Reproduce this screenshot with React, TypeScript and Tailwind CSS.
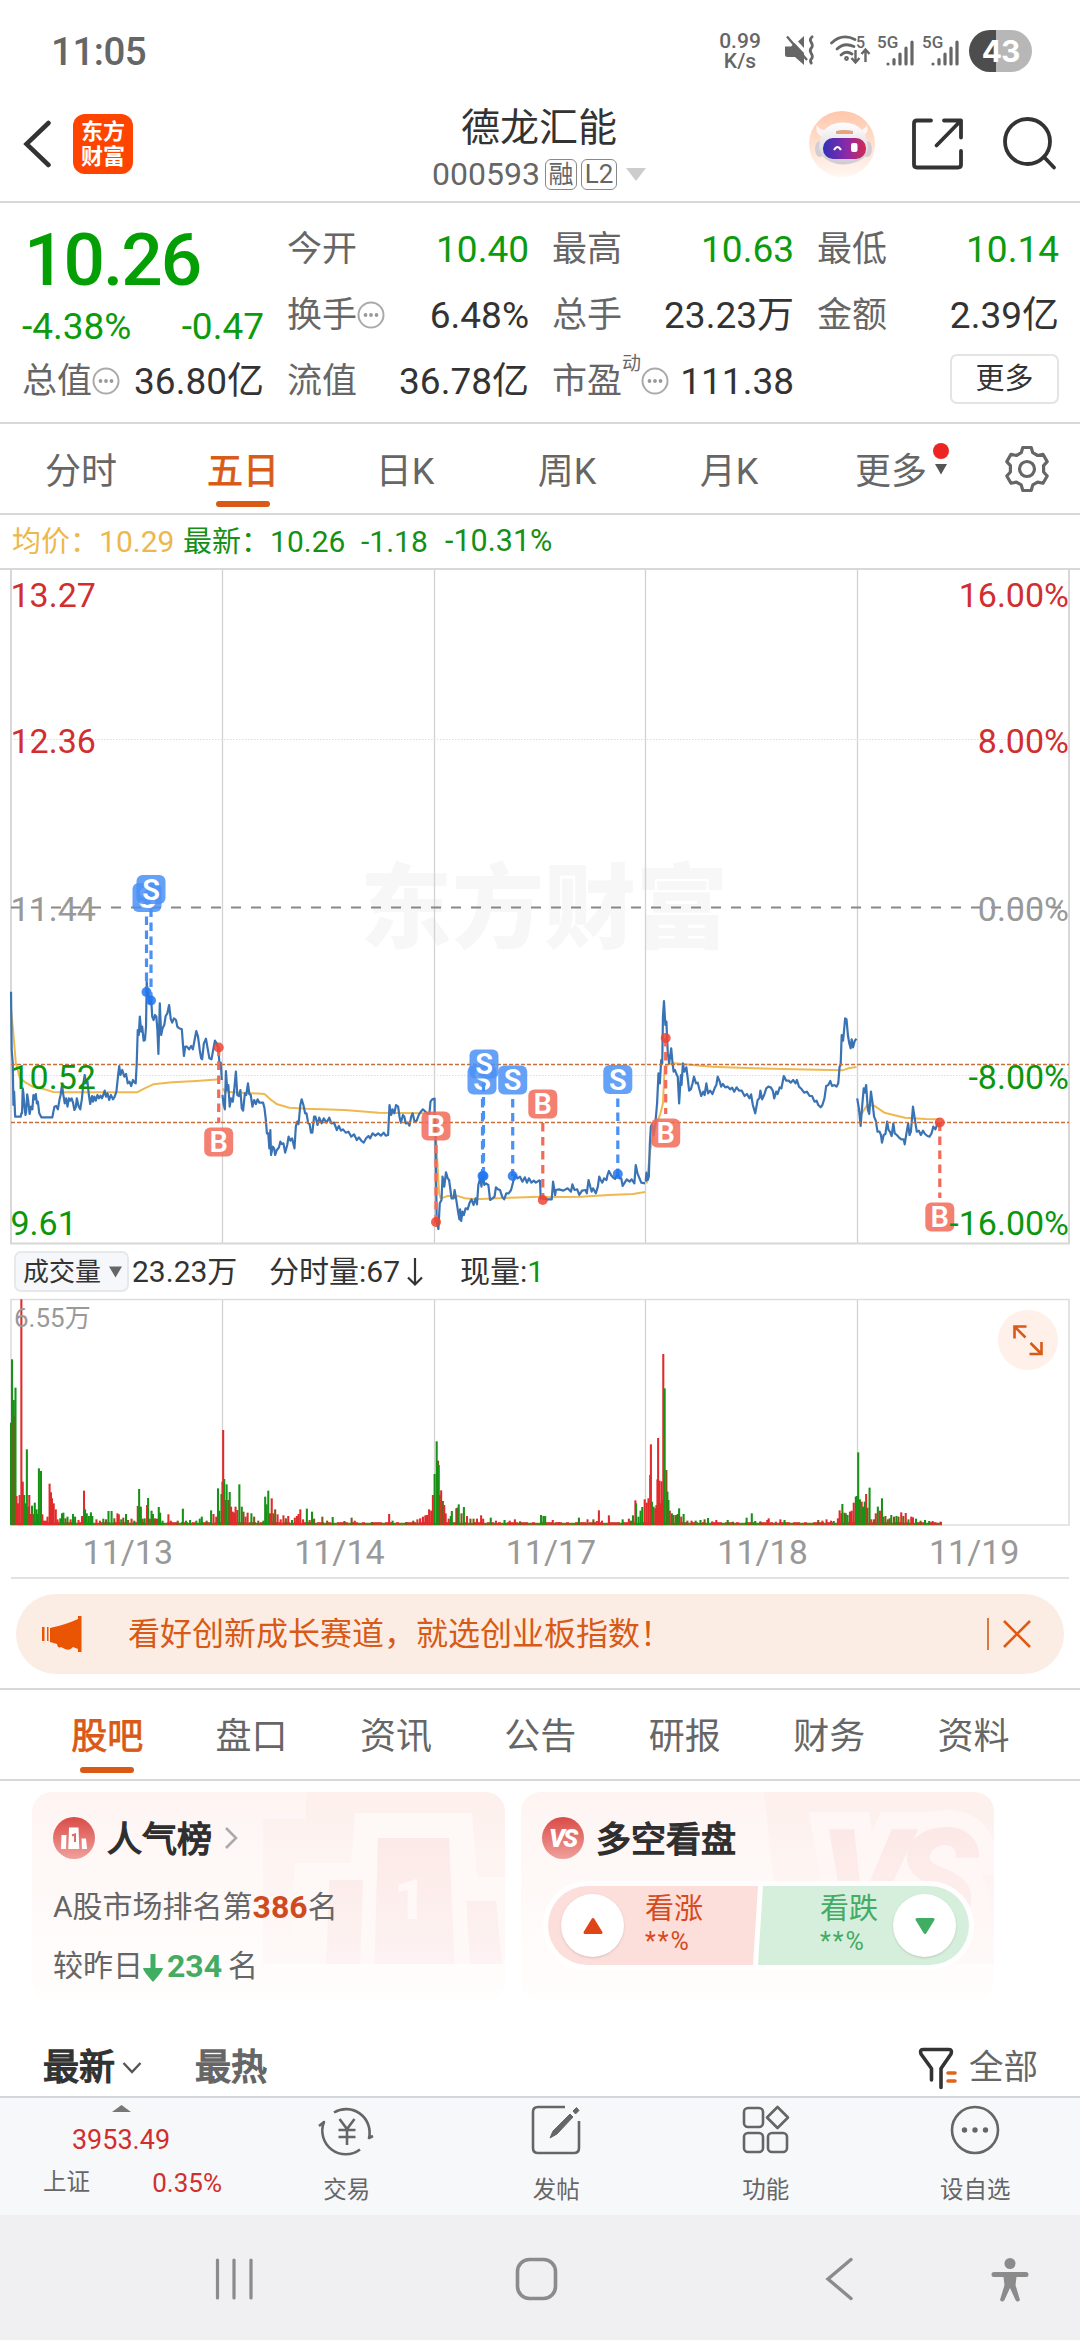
import type { ReactNode } from "react";
import clsx from "clsx";

const UP = "#d12f2f";
const DOWN = "#0c960c";
const BRAND = "#d85a16";

// Price and average series, one polyline per session. The chart is plotted in
// two halves, each half in its own 1568 x 1200 plotting space.
const PRICE_LEFT = [
  "32,425 34,600 37,640 39,765 41,725 44,800 60,800 62,790 64,790 66,715 68,730 71,770 74,795 76,785 79,733 82,752 86,792 90,770 94,778 97,735 100,748 104,732 107,760 110,755 114,790 120,802 152,802 158,770 163,768 168,778 173,748 176,735 180,705 184,735 188,760 192,745 196,770 200,745 204,752 208,745 212,758 216,780 220,772 223,745 228,768 233,778 238,745 242,700 246,675 250,700 254,695 258,735 262,762 267,738 270,755 274,740 278,752 283,735 287,745 292,737 296,745 300,735 304,722 308,740 312,730 317,750 322,735 328,748 333,740 338,725 342,685 346,648 350,675 355,660 361,680 366,672 371,700 376,695 381,708 386,690 391,698 394,700 397,640 400,540 403,555 406,500 410,545 413,530 417,572 421,570 424,530 426,395 428,420 430,420 434,460 438,430 442,500 446,510 450,495 454,500 457,540 460,612 464,460 468,555 472,535 477,525 481,498 486,490 491,465 496,508 500,518 505,505 511,510 515,530 520,535 528,538 531,580 534,618 538,590 543,590 549,598 555,588 560,598 565,570 570,543 575,560 580,600 584,625 587,628 592,580 598,566 602,590 608,625 614,628 619,600 624,572 629,580 634,595 637,640 641,638 644,690",
  "646,735 649,762 653,778 656,663 660,720 663,705 667,770 671,745 676,755 680,720 685,665 689,735 694,738 698,720 702,775 706,782 711,730 715,735 720,700 724,732 728,735 733,770 738,750 743,762 748,748 753,758 758,758 764,758 768,775 772,810 775,850 779,850 782,895 785,840 787,915 792,890 796,895 799,915 804,900 810,892 814,875 818,882 823,880 828,908 834,885 838,860 843,872 848,865 855,895 859,830 863,815 867,822 872,765 876,748 881,765 886,790 890,790 895,820 899,822 903,848 907,848 912,800 916,800 922,825 927,803 934,820 940,805 948,818 956,803 962,820 970,818 978,840 984,828 990,842 996,838 1004,848 1012,845 1020,860 1028,853 1036,870 1042,862 1050,873 1056,878 1063,865 1070,858 1075,865 1082,850 1090,857 1098,850 1106,857 1114,848 1120,857 1127,855 1131,765 1136,795 1140,778 1145,790 1150,765 1156,770 1160,800 1164,818 1170,795 1174,800 1178,820 1184,818 1189,827 1194,800 1198,790 1204,815 1210,812 1216,795 1222,785 1228,778 1240,790 1247,790 1250,755 1255,748 1262,746 1262,790",
  "1263,790 1265,900 1268,1115 1273,1137 1277,1060 1282,1050 1285,980 1290,1010 1295,967 1300,985 1304,990 1308,1020 1311,1045 1317,1045 1320,1020 1325,1050 1330,1085 1334,1108 1336,1078 1339,1113 1343,1085 1347,1095 1352,1075 1358,1078 1363,1060 1369,1048 1375,1065 1381,1045 1385,1063 1389,1005 1394,985 1398,1010 1402,965 1406,1005 1411,1000 1418,1005 1423,1050 1430,1045 1436,1040 1440,1012 1446,1018 1452,1020 1458,1040 1464,1048 1470,1030 1477,1030 1484,1020 1489,1000 1495,975 1503,985 1510,980 1517,995 1524,982 1530,998 1536,985 1543,998 1550,992 1556,998 1568,990",
];
const PRICE_RIGHT = [
  "0,990 2,1045 10,1045 20,1048 34,1048 38,995 44,1035 46,1020 55,1018 68,1022 80,1015 90,1025 94,1003 100,1020 108,1018 114,1035 122,1022 132,1020 136,1030 141,990 146,1010 150,1025 154,1015 162,1030 168,1010 172,980 176,990 181,998 186,985 193,990 196,975 200,963 206,975 213,983 218,987 226,972 231,985 236,985 240,1008 246,998 252,988 260,995 266,988 274,1000 278,945 283,970 289,985 294,998 305,1000",
  "307,995 309,968 313,990 316,980 319,880 322,830 326,820 330,855 335,820 340,760 344,670 348,700 352,630 355,640 357,500 360,453 364,525 367,515 371,610 375,640 381,595 385,640 388,665 392,660 396,672 400,680 404,760 409,675 411,705 415,640 419,665 425,652 429,685 433,722 438,718 443,700 447,680 453,700 458,698 462,715 468,738 474,725 478,735 483,700 488,730 494,722 501,732 508,712 512,705 516,680 522,695 526,710 531,702 538,712 545,710 552,718 558,713 564,725 571,712 578,722 586,722 594,738 601,732 608,745 613,733 618,765 625,790 632,750 637,745 640,722 645,748 651,735 657,715 663,710 670,712 676,722 680,745 686,725 690,732 696,712 701,715 708,678 715,692 722,692 728,698 735,690 742,700 746,690 752,710 760,718 767,728 775,725 783,738 790,738 797,755 803,752 808,765 815,772 820,765 826,745 831,708 837,705 843,693 848,708 855,705 861,710 866,700 870,650 873,645 876,555 880,572 883,540 886,505 890,508 894,555 898,580 902,595 905,568 909,592 914,572 919,566",
  "921,745 926,775 931,828 936,762 940,715 943,728 947,705 952,780 956,792 961,725 966,762 970,800 975,812 980,845 986,845 990,855 993,878 998,855 1003,852 1008,815 1012,840 1016,845 1021,858 1026,820 1030,850 1036,855 1042,862 1049,868 1056,868 1059,883 1064,850 1069,820 1073,855 1077,845 1083,770 1088,805 1094,845 1100,842 1106,855 1112,842 1118,852 1125,858 1131,860 1137,850 1142,830 1148,838 1154,822 1160,818",
];
const AVG_LEFT = [
  "32,480 38,540 46,640 58,685 75,698 95,710 130,718 155,726 200,727 300,727 398,727 420,715 445,703 500,697 570,693 640,688",
  "646,715 653,725 705,728 768,732 785,748 805,763 840,773 890,776 1000,780 1100,788 1230,790 1262,790",
  "1263,790 1268,900 1275,1030 1280,1045 1300,1038 1325,1037 1350,1045 1380,1048 1480,1043 1568,1040",
];
const AVG_RIGHT = [
  "0,1042 120,1040 200,1035 270,1032 305,1026",
  "310,1000 320,900 335,830 350,790 357,760 362,650 372,643 390,640 420,643 500,650 620,655 740,658 878,661 895,655 919,651",
  "921,780 935,790 950,765 970,767 1000,788 1060,803 1120,807 1160,808",
];

// Volume bars as "x top colour" (g = down, r = up, m = both overlapping).
const VOL_LEFT =
  "32 548 g,35 358 g,38 548 m,40 480 g,42 527 m,45 443 g,48 768 r,52 790 r,57 765 r,62 178 r,66 725 r,70 765 g,74 790 g,78 628 g,82 800 g,85 765 r,88 822 r,93 797 g,97 822 r,101 788 g,106 808 g,110 822 g,113 685 g,119 693 g,123 823 r,128 842 r,133 842 r,138 830 r,144 731 r,148 757 r,151 775 r,156 790 r,162 808 r,167 838 r,175 835 g,180 820 g,184 818 g,190 835 m,196 830 g,205 838 r,212 822 g,218 830 g,228 840 r,238 828 r,244 752 r,247 808 g,252 820 g,258 828 g,264 817 g,268 828 g,280 838 r,290 842 r,300 836 g,308 838 m,315 813 g,324 813 g,332 835 m,341 820 r,345 823 r,352 838 g,358 833 m,366 822 g,372 840 m,382 836 r,390 842 g,400 798 r,404 747 g,409 800 g,414 836 m,420 835 g,427 795 r,430 774 g,435 836 r,440 812 g,444 822 g,450 835 m,456 836 r,461 801 g,465 818 g,472 842 g,489 823 r,496 842 r,516 842 m,531 806 g,540 842 g,552 840 g,570 842 g,580 836 g,586 830 g,600 842 m,613 811 g,620 822 r,628 830 r,633 745 g,637 812 g,643 762 g,646 725 m,648 570 r,651 717 g,655 780 r,658 733 g,663 780 m,667 756 g,671 800 r,676 815 r,680 818 r,684 800 r,689 810 r,695 733 g,702 800 g,707 815 m,713 830 r,719 818 r,730 820 g,738 830 m,750 842 m,765 842 g,770 770 g,774 793 g,779 752 g,784 820 r,789 775 r,794 820 m,799 808 m,806 823 r,815 838 r,823 826 r,830 835 m,837 828 r,848 840 g,856 833 r,862 828 r,867 822 r,872 808 r,880 838 r,891 806 g,899 840 m,906 815 g,912 836 m,936 830 m,950 842 m,966 831 g,1000 843 m,1021 833 m,1030 842 r,1080 846 m,1130 822 r,1140 842 g,1180 846 m,1200 842 m,1212 838 r,1220 835 r,1228 830 r,1235 826 r,1240 825 r,1246 808 r,1252 812 r,1257 765 r,1262 702 g,1268 604 g,1272 662 m,1274 675 g,1277 765 m,1281 751 r,1286 783 m,1290 795 r,1294 820 r,1303 836 r,1309 828 g,1312 813 g,1325 805 r,1328 803 m,1332 793 g,1340 820 m,1347 801 g,1356 828 r,1366 836 m,1375 836 m,1385 836 r,1397 826 r,1403 836 r,1425 833 g,1440 842 r,1465 840 g,1480 842 r,1495 838 r,1510 844 m";
const VOL_RIGHT =
  "3 825 g,10 828 g,15 828 g,37 840 r,55 846 r,113 833 g,138 838 r,155 838 m,165 843 r,171 811 r,180 842 r,200 826 r,240 838 g,258 836 r,264 842 m,270 826 g,277 781 r,279 790 g,286 830 g,292 812 g,297 801 g,304 778 r,310 788 r,315 775 r,320 705 r,322 613 r,325 785 g,330 800 g,335 805 r,338 795 r,341 718 r,343 594 r,347 722 r,350 790 r,353 724 r,356 780 r,358 342 r,362 445 g,367 690 m,370 755 g,373 780 g,377 812 r,383 820 g,388 825 m,395 825 g,400 822 m,404 805 g,410 830 r,417 822 g,428 842 m,440 842 r,452 842 g,466 840 g,478 838 m,488 834 g,500 844 r,512 840 r,545 840 g,560 845 m,600 833 g,615 820 g,625 843 g,640 844 m,660 840 r,664 835 r,685 845 r,698 838 r,710 840 g,808 840 m,820 842 r,832 838 r,845 842 r,853 843 g,865 835 r,870 811 r,875 820 r,878 792 g,884 818 m,888 820 g,893 825 g,900 815 r,905 812 r,911 788 r,917 770 m,920 768 g,924 637 g,929 778 g,934 785 r,938 800 g,943 785 g,947 762 r,951 803 m,957 743 g,962 838 r,970 838 m,975 820 r,981 800 g,987 812 r,993 775 g,997 830 g,1003 828 m,1010 838 g,1015 835 r,1020 825 g,1028 830 m,1035 828 g,1041 830 m,1049 817 r,1055 828 m,1062 819 r,1070 838 g,1078 830 r,1083 832 r,1092 836 g,1105 842 m,1118 840 g,1130 843 g,1140 843 r,1150 848 r,1163 845 r";

const VOL_COLORS: Record<string, string> = { g: "#179217", r: "#df2b2b", m: "#7a5a18" };

type Marker = { side: "B" | "S"; x: number; y: number; dotX: number; dotY: number };

const MARKERS: Marker[] = [
  { side: "S", x: 147, y: 897.5, dotX: 146.5, dotY: 992 },
  { side: "S", x: 151, y: 889.5, dotX: 151, dotY: 1000.5 },
  { side: "B", x: 218.7, y: 1142, dotX: 218.7, dotY: 1047.5 },
  { side: "B", x: 436, y: 1126, dotX: 436, dotY: 1222 },
  { side: "S", x: 482, y: 1080, dotX: 482.5, dotY: 1176 },
  { side: "S", x: 484, y: 1064, dotX: 483.5, dotY: 1176 },
  { side: "S", x: 512.7, y: 1080, dotX: 512.7, dotY: 1176 },
  { side: "B", x: 542.8, y: 1104, dotX: 542.8, dotY: 1200 },
  { side: "S", x: 617.8, y: 1079.5, dotX: 617.8, dotY: 1174 },
  { side: "B", x: 665.7, y: 1133, dotX: 665.7, dotY: 1038 },
  { side: "B", x: 939.8, y: 1217, dotX: 939.8, dotY: 1122.5 },
];

const DAY_LINES = [222.5, 434.5, 645.5, 857.5];

function StatusBar() {
  return (
    <div className="flex h-[88px] items-start pl-[51px] pt-[30px] text-[#666]">
      <span className="mt-[2px] w-[666px] text-[38.500px] font-medium leading-[39px] tracking-[-0.500px]">11:05</span>
      <div className="mt-[1px] w-[46px] text-center text-[21px] font-medium leading-[20px]">
        <div>0.99</div>
        <div>K/s</div>
      </div>
      <svg className="ml-[21px] mt-[4px] h-[32px] w-[32px]" viewBox="0 0 32 32" fill="none">
        <path d="M1 12.500h6l3.500-3.500L20 19v12l-9-8H3.500Q1 23 1 20.500Z" fill="#666" />
        <path d="M20 2v12l-6-6.500Z" fill="#666" />
        <path d="M3 2.500 23 26" stroke="#666" strokeWidth="2.400" />
        <path d="M29 2q-4 3-2 6t1 5q-3 3-1 6t1 5q-3 3 0 6" stroke="#666" strokeWidth="2.800" />
      </svg>
      <svg className="ml-[14px] mt-[4px] h-[32px] w-[42px] overflow-visible" viewBox="0 0 42 32" fill="none" stroke="#666" strokeWidth="2.800">
        <path d="M1.500 9Q12 -1 25 5.500M7 15q7-7 17-2.500M11 21q5-5 11-1" strokeLinecap="round" />
        <circle cx="16.500" cy="24.500" r="1" />
        <path d="M25.500 16v12m-4-4 4 4.500 4-4.500M35.500 28V16m-4 4 4-4.500 4 4.500" strokeWidth="2.400" />
        <text x="26" y="13.500" fontSize="16" fontWeight="500" fill="#666" stroke="none">5</text>
      </svg>
      <SignalIcon className="ml-[5px]" />
      <SignalIcon className="ml-[5px]" />
      <div className="ml-[7px] flex h-[42px] w-[63px] items-center justify-center rounded-full bg-linear-to-r from-[#4d4d4d] from-43% to-[#b7b7b7] to-43% font-[Inter] text-[30px] font-bold leading-none tracking-[-1px] text-white">
        43
      </div>
    </div>
  );
}

function SignalIcon({ className }: { className?: string }) {
  return (
    <svg className={clsx("mt-[4px] h-[32px] w-[40px] shrink-0 overflow-visible", className)} viewBox="0 0 40 32">
      <text x="0" y="13.500" fontSize="17" fontWeight="500" fill="#666">5G</text>
      <g stroke="#666" strokeWidth="3.200" strokeLinecap="round">
        <path d="M11 30v0M17 30v-4.500M23 30V20M29 30V14M35 30V8" />
      </g>
    </svg>
  );
}

function Header() {
  return (
    <header className="flex h-[115px] items-start border-b-2 border-[#d8d8d8] pl-[22px]">
      <svg className="mt-[32px] h-[48px] w-[30px]" viewBox="0 0 30 48" fill="none">
        <path d="M26.500 3 4.500 24l22 21" stroke="#333" strokeWidth="4.500" strokeLinecap="round" />
      </svg>
      <div className="ml-[21px] mt-[26px] flex h-[60px] w-[60px] flex-col items-center justify-center rounded-[12px] bg-[#ff4400] text-[22px] font-bold leading-[25px] text-white">
        <span>东方</span>
        <span>财富</span>
      </div>
      <div className="ml-[293px] flex w-[226px] flex-col items-center">
        <h1 className="mt-[21px] text-[39px] leading-[39px] text-[#333]">德龙汇能</h1>
        <div className="mt-[8px] flex h-[36px] items-center text-[32px] leading-none text-[#666]">
          <span>000593</span>
          <span className="ml-[5px] flex h-[31px] w-[32px] items-center justify-center rounded-[6px] border-[1.500px] border-[#888] text-[25px]">
            融
          </span>
          <span className="ml-[4px] flex h-[31px] w-[36px] items-center justify-center rounded-[6px] border-[1.500px] border-[#888] text-[26px]">
            L2
          </span>
          <svg className="ml-[9px] h-[14px] w-[20px]" viewBox="0 0 20 14">
            <path d="M0 1h20L10 14Z" fill="#ccc" />
          </svg>
        </div>
      </div>
      <Robot />
      <svg className="ml-[35px] mt-[28px] h-[56px] w-[56px]" viewBox="0 0 56 56" fill="none" stroke="#333" strokeWidth="3.800" strokeLinecap="round" strokeLinejoin="round">
        <path d="M21 4.500H7Q4 4.500 4 7.500v41q0 3 3 3h41q3 0 3-3V35M34 4.500h17v17M50 5.500 26.500 29.500" />
      </svg>
      <svg className="ml-[34px] mt-[26px] h-[60px] w-[60px]" viewBox="0 0 60 60" fill="none" stroke="#333" strokeWidth="3.800" strokeLinecap="round">
        <circle cx="27.500" cy="27.500" r="22.500" />
        <path d="m44 43 10 10.500" />
      </svg>
    </header>
  );
}

function Robot() {
  return (
    <svg className="ml-[157px] mt-[23px] h-[66px] w-[66px]" viewBox="0 0 66 66">
      <defs>
        <linearGradient id="halo" x1="0" y1="0" x2="0" y2="1">
          <stop offset="0" stopColor="#ffc7ab" />
          <stop offset="1" stopColor="#fff8f3" />
        </linearGradient>
        <linearGradient id="visor" x1="0" y1="0" x2="1" y2="0">
          <stop offset="0" stopColor="#3430b8" />
          <stop offset="0.550" stopColor="#8a2aa8" />
          <stop offset="1" stopColor="#d52a50" />
        </linearGradient>
        <linearGradient id="shell" x1="0" y1="0" x2="0" y2="1">
          <stop offset="0" stopColor="#ffffff" />
          <stop offset="1" stopColor="#cfc9d4" />
        </linearGradient>
      </defs>
      <circle cx="33" cy="33" r="33" fill="url(#halo)" />
      <path d="M13 26Q5 21 8 14q3 6 9 5ZM52 26q9-4 6-12-3 6-9 5Z" fill="#fbf5f3" />
      <ellipse cx="11" cy="38" rx="5" ry="8" fill="#d3ced6" />
      <ellipse cx="58" cy="38" rx="5" ry="8" fill="#d3ced6" />
      <path d="M10 36Q11 12 34 11.500 57 12 59 36 59 52 34 53.500 12 52 10 36Z" fill="url(#shell)" />
      <path d="M27 20q8-2 17 0v3H27Z" fill="#e3a57e" />
      <rect x="14" y="27" width="43" height="21" rx="10" fill="url(#visor)" />
      <path d="M25 39q3.500-6 7 0" fill="none" stroke="#fff" strokeWidth="2" />
      <rect x="42" y="32" width="6.500" height="9" rx="2" fill="#fff" />
    </svg>
  );
}

function InfoDot() {
  return (
    <svg className="h-[28px] w-[28px] shrink-0" viewBox="0 0 28 28">
      <circle cx="14" cy="14" r="12.500" fill="none" stroke="#aaa" strokeWidth="2" />
      <g fill="#999">
        <circle cx="8.500" cy="14" r="1.900" />
        <circle cx="14" cy="14" r="1.900" />
        <circle cx="19.500" cy="14" r="1.900" />
      </g>
    </svg>
  );
}

function Cell({ label, value, info, sup, down }: { label: string; value: string; info?: boolean; sup?: string; down?: boolean }) {
  return (
    <div className="flex h-[66px] items-center justify-between whitespace-nowrap leading-none">
      <div className="flex items-center text-[35px] text-[#666]">
        {label}
        {sup && <span className="-mt-[36px] text-[19px]">{sup}</span>}
        {info && <InfoDot />}
      </div>
      <span className={clsx("text-[37px]", down ? "text-[#0c9b0c]" : "text-[#333]")}>{value}</span>
    </div>
  );
}

function Quote() {
  return (
    <section className="flex h-[221px] gap-[23px] border-b-2 border-[#d8d8d8] pl-[22px] pt-[13px]">
      <div className="w-[242px]">
        <div className="flex h-[88px] items-center pl-[2px] text-[73px] font-medium leading-none tracking-[-2px] text-[#049f04]">10.26</div>
        <div className="flex h-[44px] items-center justify-between text-[37px] leading-none text-[#0c9b0c]">
          <span>-4.38%</span>
          <span>-0.47</span>
        </div>
        <Cell label="总值" value="36.80亿" info />
      </div>
      <div className="w-[242px]">
        <Cell label="今开" value="10.40" down />
        <Cell label="换手" value="6.48%" info />
        <Cell label="流值" value="36.78亿" />
      </div>
      <div className="w-[242px]">
        <Cell label="最高" value="10.63" down />
        <Cell label="总手" value="23.23万" />
        <Cell label="市盈" value="111.38" sup="动" info />
      </div>
      <div className="w-[242px]">
        <Cell label="最低" value="10.14" down />
        <Cell label="金额" value="2.39亿" />
        <div className="flex h-[62px] items-center justify-end">
          <button className="h-[50px] w-[109px] rounded-[7px] border-2 border-[#e4e4e4] text-[29px] leading-none text-[#333]">
            更多
          </button>
        </div>
      </div>
    </section>
  );
}

function PeriodTabs() {
  const tabs = ["分时", "五日", "日K", "周K", "月K"];
  return (
    <nav className="flex h-[91px] border-b-2 border-[#d8d8d8] text-[36px] leading-none text-[#666]">
      {tabs.map((tab) => (
        <div
          key={tab}
          className={clsx("flex w-[162px] flex-col items-center pt-[30px]", tab === "五日" && "text-[#d85a16] [-webkit-text-stroke:0.8px]")}
        >
          {tab}
          {tab === "五日" && <span className="mt-[11px] h-[6px] w-[54px] rounded-full bg-[#d85a16]" />}
        </div>
      ))}
      <div className="flex pl-[45px] pt-[30px]">
        更多
        <svg className="-mt-[12px] ml-[5px] h-[44px] w-[18px]" viewBox="0 0 18 44">
          <circle cx="9" cy="9" r="8" fill="#ee2424" />
          <path d="M3 22h12L9 32.500Z" fill="#555" />
        </svg>
      </div>
      <svg className="ml-[52px] mt-[20px] h-[50px] w-[50px]" viewBox="0 0 50 50" fill="none" stroke="#666" strokeWidth="3.200" strokeLinejoin="round">
        <path d="M20.800 3.500h8.400l1.600 5.200 4.800 2.800 5.400-1.200 4.200 7.300-3.600 4v6.400l3.600 4-4.200 7.300-5.400-1.200-4.800 2.800-1.600 5.600h-8.400l-1.600-5.600-4.800-2.800L9 39.300 4.800 32l3.600-4v-6.400l-3.600-4L9 10.300l5.400 1.200 4.800-2.800Z" />
        <circle cx="25" cy="25" r="7.500" />
      </svg>
    </nav>
  );
}

function AverageLine() {
  return (
    <div className="flex h-[55px] items-center whitespace-pre border-b-2 border-[#d8d8d8] pl-[12px] text-[30px] leading-none text-[#168f16]">
      <span className="w-[171px] text-[#ecb84d]">
        <span className="text-[29px]">均价：</span>10.29
      </span>
      <span className="w-[178px]">
        <span className="text-[29px]">最新：</span>10.26
      </span>
      <span className="w-[84px]">-1.18</span>
      <span className="text-[30.500px]">-10.31%</span>
    </div>
  );
}

function SeriesHalf({ x, price, avg }: { x: number; price: string[]; avg: string[] }) {
  return (
    <g transform={`translate(${x} 850) scale(0.34439 0.33333)`} fill="none" strokeLinejoin="round">
      {avg.map((points) => (
        <polyline key={points} points={points} stroke="#f0b850" strokeWidth="2" vectorEffect="non-scaling-stroke" />
      ))}
      {price.map((points) => (
        <polyline key={points} points={points} stroke="#3a73b4" strokeWidth="2.200" vectorEffect="non-scaling-stroke" />
      ))}
    </g>
  );
}

function TradeMarker({ side, x, y, dotX, dotY }: Marker) {
  const color = side === "B" ? "#f26a58" : "#4a90f5";
  const edge = dotY > y ? y + 19 : y - 19;
  return (
    <g>
      <path d={dotY > y ? `M${dotX} ${edge}V${dotY}` : `M${dotX} ${dotY}V${edge}`} stroke={color} strokeWidth="3.200" strokeDasharray="8.500 5.500" />
      <circle cx={dotX} cy={dotY} r="5" fill={side === "B" ? "#ee4433" : "#2176f0"} opacity="0.85" />
      <rect x={x - 14.5} y={y - 14.5} width="29" height="29" rx="6" fill={color} opacity="0.85" />
      <text x={x} y={y + 10.2} textAnchor="middle" fontSize="29" fontWeight="600" fill="#fff">
        {side}
      </text>
    </g>
  );
}

function PriceChart() {
  const left: [string, number, string][] = [
    ["13.27", 607, UP],
    ["12.36", 752.5, UP],
    ["11.44", 921, "#999"],
    ["10.52", 1088.5, DOWN],
    ["9.61", 1235, DOWN],
  ];
  const right = ["16.00%", "8.00%", "0.00%", "-8.00%", "-16.00%"];
  return (
    <svg className="block h-[675px] w-[1080px]" viewBox="0 570 1080 675">
      <text x="544" y="941" textAnchor="middle" fontSize="92" fontWeight="900" fill="#f7f7f7">
        东方财富
      </text>
      <path d={DAY_LINES.map((x) => `M${x} 570V1243`).join("")} stroke="#d2d2d2" strokeWidth="1.300" />
      <path d="M11 570V1243.500H1069V570" fill="none" stroke="#d8d8d8" strokeWidth="2" />
      <path d="M11 739.500H1069M11 1075.500H1069" stroke="#ddd" strokeWidth="1.200" strokeDasharray="1.500 1.500" />
      <SeriesHalf x={0} price={PRICE_LEFT} avg={AVG_LEFT} />
      <SeriesHalf x={540} price={PRICE_RIGHT} avg={AVG_RIGHT} />
      <path d="M11 1064.500H1069M11 1122.500H1069" stroke="#c8703c" strokeWidth="1.500" strokeDasharray="4 2" />
      <path d="M11 907.500H1069" stroke="#888" strokeWidth="2" strokeDasharray="10 10" />
      {MARKERS.map((m) => (
        <TradeMarker key={`${m.x}-${m.y}`} {...m} />
      ))}
      <g fontSize="34">
        {left.map(([label, y, fill], i) => (
          <g key={label} fill={fill}>
            <text x="10.500" y={y}>{label}</text>
            <text x="1069" y={y} textAnchor="end">{right[i]}</text>
          </g>
        ))}
      </g>
    </svg>
  );
}

function VolumeHalf({ x, bars }: { x: number; bars: string }) {
  return (
    <g transform={`translate(${x} 1240) scale(0.34439 0.33333)`}>
      {bars.split(",").map((bar) => {
        const [bx, top, tone] = bar.split(" ");
        return <rect key={bar} x={Number(bx) - 3} y={top} width="6" height={855 - Number(top)} fill={VOL_COLORS[tone]} />;
      })}
    </g>
  );
}

function VolumeChart() {
  return (
    <svg className="block h-[230px] w-[1080px]" viewBox="0 1298 1080 230">
      <path d="M11 1525V1299.500H1069V1525Z" fill="none" stroke="#dedede" strokeWidth="1.600" />
      <path d={DAY_LINES.map((x) => `M${x} 1300V1525`).join("")} stroke="#d2d2d2" strokeWidth="1.300" />
      <path d="M11 1524H942" stroke="#5f7a16" strokeWidth="2.500" />
      <path d="M11 1523.500H942" stroke="#df2b2b" strokeWidth="2.500" strokeDasharray="7 4 3 6 11 3" />
      <VolumeHalf x={0} bars={VOL_LEFT} />
      <VolumeHalf x={540} bars={VOL_RIGHT} />
      <text x="14" y="1327" fontSize="26" fill="#999">6.55万</text>
      <circle cx="1028" cy="1340" r="30" fill="#fff0e9" />
      <path d="M1026.500 1326.500H1014.500V1338.500M1015 1327 1025.500 1337.500M1029.500 1354H1041.500V1342M1041 1353.500 1030.500 1343" fill="none" stroke={BRAND} strokeWidth="2.600" />
    </svg>
  );
}

function VolumeLegend() {
  return (
    <div className="flex h-[53px] items-center whitespace-nowrap pl-[14px] text-[30px] leading-none text-[#333]">
      <div className="flex h-[41px] w-[115px] items-center rounded-[7px] border-2 border-[#e6e8ec] bg-[#f6f7fa] pl-[7px] text-[26px]">
        成交量
        <svg className="ml-[8px] h-[12px] w-[13px]" viewBox="0 0 14 12">
          <path d="M0 0h14L7 12Z" fill="#666" />
        </svg>
      </div>
      <span className="ml-[3px] w-[137px]">23.23万</span>
      <span>分时量:67</span>
      <svg className="ml-[6px] h-[30px] w-[18px]" viewBox="0 0 18 30" fill="none" stroke="#333" strokeWidth="2.200">
        <path d="M9 1v26M2 20.500l7 7 7-7" />
      </svg>
      <span className="ml-[36px]">
        现量:<span className="text-[#0c960c]">1</span>
      </span>
    </div>
  );
}

function Promo() {
  return (
    <div className="px-4 pb-[14px] pt-[15px]">
      <div className="flex h-[80px] items-center rounded-full bg-[#fbede4] pl-[25px] text-[32px] leading-none text-[#d85a16]">
        <svg className="h-[36px] w-[42px]" viewBox="0 0 42 36" fill="#ea5504">
          <path d="M1 11h2.500v14H1ZM6 11h1.500v14H6ZM9 12Q24 9 37 3V0h3.500v36H37v-3l-5-2q-3 4-8 2l-4-2q-3 2-4-3L9 26Z" />
        </svg>
        <span className="ml-[45px]">看好创新成长赛道，就选创业板指数！</span>
        <span className="ml-auto h-[32px] w-[2px] bg-[#d9793f]" />
        <svg className="ml-[13px] mr-[32px] h-[30px] w-[30px]" viewBox="0 0 30 30" stroke="#e05a12" strokeWidth="2.600">
          <path d="M2 2l26 26M28 2 2 28" />
        </svg>
      </div>
    </div>
  );
}

function SectionTabs() {
  const tabs = ["股吧", "盘口", "资讯", "公告", "研报", "财务", "资料"];
  return (
    <nav className="flex h-[93px] border-y-2 border-[#d8d8d8] pl-[35px] text-[36px] leading-none text-[#666]">
      {tabs.map((tab, i) => (
        <div key={tab} className={clsx("flex w-[144.400px] flex-col items-center pt-[29px]", i === 0 && "text-[#d85a16] [-webkit-text-stroke:0.8px]")}>
          {tab}
          {i === 0 && <span className="mt-[12px] h-[6px] w-[54px] rounded-full bg-[#d85a16]" />}
        </div>
      ))}
    </nav>
  );
}

function CardShell({ art, children }: { art: ReactNode; children: ReactNode }) {
  return (
    <div className="relative h-[209px] w-[473px] overflow-hidden rounded-[20px] bg-linear-to-b from-[#fef5f3] to-[#fffefd]">
      <svg className="absolute inset-0 h-[209px] w-[473px]" viewBox="0 0 473 209">
        <defs>
          <linearGradient id="tint" x1="0" y1="0" x2="0" y2="172" gradientUnits="userSpaceOnUse">
            <stop offset="0" stopColor="#fdf0ed" />
            <stop offset="1" stopColor="#fef9f8" />
          </linearGradient>
          <linearGradient id="solid" x1="0" y1="40" x2="0" y2="172" gradientUnits="userSpaceOnUse">
            <stop offset="0" stopColor="#fce9e7" />
            <stop offset="1" stopColor="#fdf3f2" />
          </linearGradient>
          <linearGradient id="badge" x1="0" y1="0" x2="0" y2="1">
            <stop offset="0" stopColor="#d94b47" />
            <stop offset="1" stopColor="#f0a09c" />
          </linearGradient>
        </defs>
        {art}
      </svg>
      <div className="relative">{children}</div>
    </div>
  );
}

function CardTitle({ children }: { children: ReactNode }) {
  return <h2 className="ml-[12px] mt-[6px] text-[35px] leading-[42px] text-[#2f2f2f] [-webkit-text-stroke:1.4px]">{children}</h2>;
}

function RankCard() {
  return (
    <CardShell
      art={
        <>
          <path d="M231 27h42l2-27h198v172H231Z" fill="url(#tint)" />
          <path d="M263 71h56l4-50h117l5 64h28v87H256Z" fill="#fef8f6" />
          <path d="M297.500 88H331l-3 84h-34ZM346 46h71l5.500 126H342.500ZM434.500 109H464l6 63h-32Z" fill="url(#solid)" />
          <text x="362" y="127" fontSize="56" fontWeight="900" fill="#fff8f6">1</text>
        </>
      }
    >
      <div className="flex h-[67px] items-end pl-[21px]">
        <svg className="h-[42px] w-[42px]" viewBox="0 0 42 42">
          <circle cx="21" cy="21" r="21" fill="url(#badge)" />
          <path d="M8.500 18h5l-.5 14H8ZM16 10.500h9.500l.8 21.500h-11ZM28.500 21.500H33l1 10.500h-5Z" fill="#fff" />
          <path d="M19 18.500l3-1V25" fill="none" stroke="#e06a66" strokeWidth="2" />
        </svg>
        <div className="-mb-[3px]">
          <CardTitle>人气榜</CardTitle>
        </div>
        <svg className="mb-[9px] ml-[11px] h-[24px] w-[16px]" viewBox="0 0 16 24" fill="none" stroke="#aaa" strokeWidth="2.600">
          <path d="M3 2l10 10L3 22" />
        </svg>
      </div>
      <p className="mt-[32px] flex items-center pl-[21px] text-[30px] leading-[32px] text-[#666]">
        A股市场排名第<b className="text-[32px] text-[#d04a20]">386</b>名
      </p>
      <p className="mt-[26px] flex items-center pl-[21px] text-[30px] leading-[32px] text-[#666]">
        较昨日
        <svg className="mt-[4px] h-[30px] w-[20px]" viewBox="0 0 20 30" fill="#3fae63">
          <path d="M7.500 1h5v14H20q0 3-10 14Q0 18 0 15h7.500Z" />
        </svg>
        <b className="ml-[4px] mr-[6px] text-[32px] text-[#43ab62]">234</b>名
      </p>
    </CardShell>
  );
}

function VoteCard() {
  return (
    <CardShell
      art={
        <>
          <path d="M243 0h230v172H262Z" fill="url(#tint)" />
          <text x="299" y="136" fontSize="138" fontWeight="900" fontStyle="italic" fill="url(#solid)" stroke="#fef7f5" strokeWidth="34" paintOrder="stroke" letterSpacing="-14">
            VS
          </text>
        </>
      }
    >
      <div className="flex h-[67px] items-end pl-[21px]">
        <svg className="h-[42px] w-[42px]" viewBox="0 0 42 42">
          <circle cx="21" cy="21" r="21" fill="url(#badge)" />
          <text x="20.500" y="30" textAnchor="middle" fontSize="25" fontWeight="900" fontStyle="italic" letterSpacing="-2" fill="#fff">
            VS
          </text>
        </svg>
        <div className="-mb-[3px]">
          <CardTitle>多空看盘</CardTitle>
        </div>
      </div>
      <div className="ml-[22px] mt-[22px] h-[89px] w-[431px] rounded-full bg-white/90 p-[5px]">
        <div className="relative flex h-full items-center px-[13px]">
          <svg className="absolute inset-0 h-[79px] w-[421px]" viewBox="0 0 421 79">
            <path d="M39.500 0H210l-5 79H39.500A39.500 39.500 0 0 1 39.500 0Z" fill="#fcdedb" />
            <path d="M215 0H381.500a39.500 39.500 0 0 1 0 79H210Z" fill="#d6eedc" />
          </svg>
          <span className="relative flex size-[63px] items-center justify-center rounded-full bg-white shadow-sm">
            <svg className="h-[18px] w-[20px]" viewBox="0 0 20 18">
              <path d="M10 2.500 18 15.500H2Z" fill="#e04516" stroke="#e04516" strokeWidth="3" strokeLinejoin="round" />
            </svg>
          </span>
          <div className="relative ml-[21px] text-[29px] leading-[30px] text-[#d64a20]">
            <div>看涨</div>
            <div className="mt-[3px] text-[25px] tracking-[2px]">**%</div>
          </div>
          <div className="relative ml-auto mr-[15px] text-[29px] leading-[30px] text-[#44ab64]">
            <div>看跌</div>
            <div className="mt-[3px] text-[25px] tracking-[2px]">**%</div>
          </div>
          <span className="relative flex size-[63px] items-center justify-center rounded-full bg-white shadow-sm">
            <svg className="h-[18px] w-[20px]" viewBox="0 0 20 18">
              <path d="M10 15.500 18 2.500H2Z" fill="#3fae63" stroke="#3fae63" strokeWidth="3" strokeLinejoin="round" />
            </svg>
          </span>
        </div>
      </div>
    </CardShell>
  );
}

function PostFilter() {
  return (
    <div className="flex h-[95px] items-center pl-[43px] pr-[42px] pt-[38px] text-[36px] leading-none">
      <span className="text-[#333] [-webkit-text-stroke:1.5px]">最新</span>
      <svg className="ml-[7px] h-[14px] w-[20px]" viewBox="0 0 20 14" fill="none" stroke="#555" strokeWidth="2.400">
        <path d="M1.500 2l8.500 9 8.500-9" />
      </svg>
      <span className="ml-[53px] text-[#666] [-webkit-text-stroke:1.5px]">最热</span>
      <svg className="ml-auto h-[44px] w-[40px]" viewBox="0 0 40 44" fill="none" strokeLinecap="round" strokeLinejoin="round">
        <path d="M13.500 34V22.500L3 8Q1.500 3.500 5 3.500H31Q34.500 3.500 33 8L23 22.500V41.500" stroke="#333" strokeWidth="3.600" />
        <path d="M30 27h7M30 35h7" stroke="#e0641c" strokeWidth="3.600" />
      </svg>
      <span className="ml-[11px] text-[34.500px] text-[#666]">全部</span>
    </div>
  );
}

function BarItem({ label, children }: { label: string; children: ReactNode }) {
  return (
    <div className="flex w-[209.500px] flex-col items-center pt-[4px]">
      <svg className="h-[56px] w-[60px]" viewBox="0 0 60 56" fill="none" stroke="#666" strokeWidth="2.600">
        {children}
      </svg>
      <span className="mt-[21px] text-[23.500px] leading-none text-[#666]">{label}</span>
    </div>
  );
}

function BottomBar() {
  return (
    <div className="flex h-[119px] border-t-2 border-[#d3d6da] bg-[#f7f8fa]">
      <div className="flex w-[242px] flex-col items-center pt-[7px] leading-none">
        <svg className="h-[7px] w-[19px]" viewBox="0 0 19 7">
          <path d="M9.500 0 19 7H0Z" fill="#777" />
        </svg>
        <span className="mt-[15px] text-[27px] text-[#d12f2f]">3953.49</span>
        <div className="ml-[23px] mt-[16px] flex w-[179px] items-center justify-between">
          <span className="text-[23.500px] text-[#666]">上证</span>
          <span className="text-[26px] text-[#d12f2f]">0.35%</span>
        </div>
      </div>
      <BarItem label="交易">
        <path d="M17 10.500A23.500 23.500 0 0 1 52 36l4-2M43 47.500A23.500 23.500 0 0 1 7 20l-5 4" strokeLinejoin="round" />
        <path d="M22.500 17 30 27l7.500-10M30 27v16M21.500 28h17M21.500 35h17" />
      </BarItem>
      <BarItem label="发帖">
        <path d="M39 5H12q-5 0-5 5v36q0 5 5 5h36q5 0 5-5V19" />
        <path d="M24 36l3-7L44 12l3 3-16 17ZM47 9l3.500-3.500 2.500 3-3.500 3.500Z" fill="#666" strokeWidth="1" />
      </BarItem>
      <BarItem label="功能">
        <rect x="8" y="6" width="19" height="19" rx="4" />
        <rect x="8" y="31" width="19" height="19" rx="4" />
        <rect x="32" y="31" width="19" height="19" rx="4" />
        <path d="M41.500 5 52 15.500 41.500 26 31 15.500Z" strokeLinejoin="round" />
      </BarItem>
      <BarItem label="设自选">
        <circle cx="30" cy="28" r="23" />
        <g fill="#666" stroke="none">
          <circle cx="19.500" cy="28" r="2.700" />
          <circle cx="30" cy="28" r="2.700" />
          <circle cx="40.500" cy="28" r="2.700" />
        </g>
      </BarItem>
    </div>
  );
}

function SystemNav() {
  return (
    <div className="flex h-[126px] bg-[#f0f0f2] pl-[210px] pt-[40px]">
      <svg className="h-[48px] w-[48px]" viewBox="0 0 48 48" stroke="#8b8b8b" strokeWidth="3.200" strokeLinecap="round">
        <path d="M7.500 5v38M24 5v38M41 5v38" />
      </svg>
      <svg className="ml-[254px] h-[48px] w-[48px]" viewBox="0 0 48 48" fill="none" stroke="#8b8b8b" strokeWidth="3.600">
        <rect x="5.500" y="4.500" width="38" height="39" rx="12" />
      </svg>
      <svg className="ml-[260px] h-[48px] w-[36px]" viewBox="0 0 36 48" fill="none" stroke="#8b8b8b" strokeWidth="3.400" strokeLinecap="round">
        <path d="M31 4.500 8 24l23 19.500" />
      </svg>
      <svg className="ml-[134px] h-[50px] w-[40px]" viewBox="0 0 40 50" fill="#8b8b8b">
        <circle cx="20" cy="8.500" r="5.500" />
        <path d="M4 17h32q2.500 0 2.500 2.500T36 22h-9.500l-1 8 4.500 15q-2.500 3-4.500 0L20 33l-5.500 12q-2 3-4.500 0l4.500-15-1-8H4Q1.500 22 1.500 19.500T4 17Z" />
      </svg>
    </div>
  );
}

export default function App() {
  const days = ["11/13", "11/14", "11/17", "11/18", "11/19"];
  return (
    <main className="h-[2340px] w-[1080px] overflow-hidden bg-white font-[Roboto,'Noto_Sans_CJK_SC',sans-serif]">
      <StatusBar />
      <Header />
      <Quote />
      <PeriodTabs />
      <AverageLine />
      <PriceChart />
      <VolumeLegend />
      <VolumeChart />
      <div className="ml-[11px] flex h-[51px] w-[1058px] border-b-2 border-[#e2e2e2] pl-[11px] pt-[7px] text-[34px] leading-[34px] text-[#999]">
        {days.map((day) => (
          <span key={day} className="w-[211.600px] shrink-0 text-center">
            {day}
          </span>
        ))}
      </div>
      <Promo />
      <SectionTabs />
      <div className="flex h-[220px] gap-4 pl-[32px] pt-[11px]">
        <RankCard />
        <VoteCard />
      </div>
      <PostFilter />
      <BottomBar />
      <SystemNav />
    </main>
  );
}
